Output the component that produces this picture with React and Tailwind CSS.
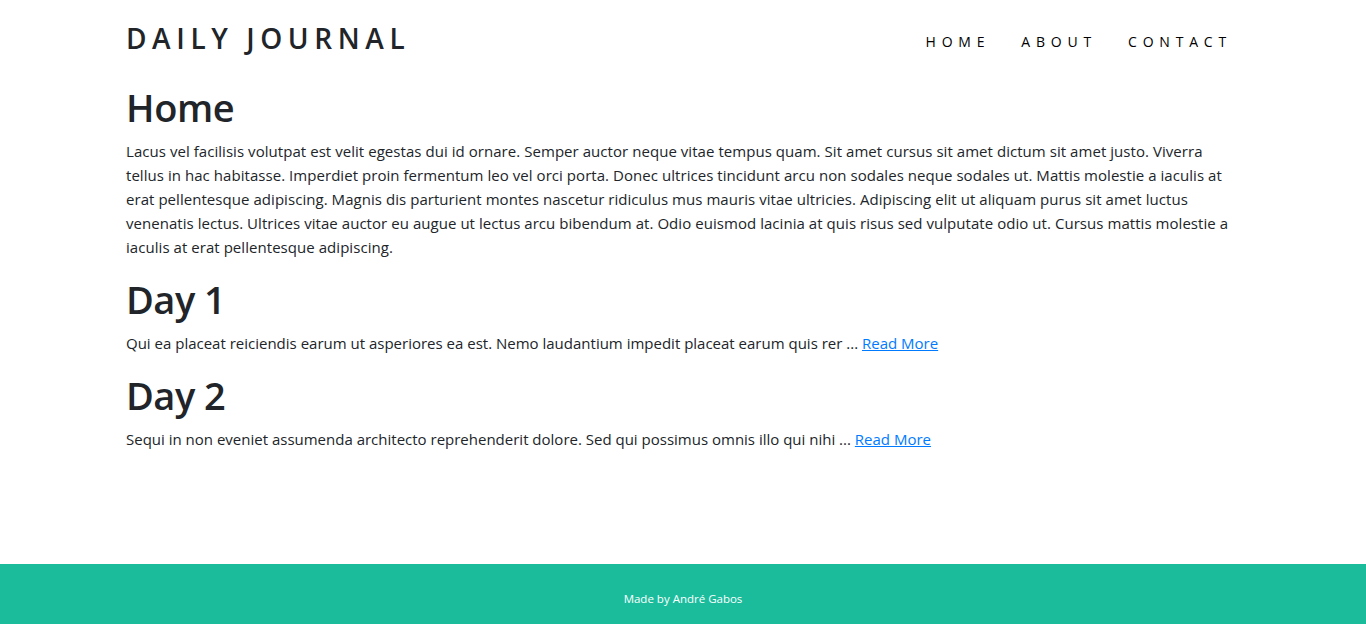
import React from "react";

const lines = [
  "Lacus vel facilisis volutpat est velit egestas dui id ornare. Semper auctor neque vitae tempus quam. Sit amet cursus sit amet dictum sit amet justo. Viverra",
  "tellus in hac habitasse. Imperdiet proin fermentum leo vel orci porta. Donec ultrices tincidunt arcu non sodales neque sodales ut. Mattis molestie a iaculis at",
  "erat pellentesque adipiscing. Magnis dis parturient montes nascetur ridiculus mus mauris vitae ultricies. Adipiscing elit ut aliquam purus sit amet luctus",
  "venenatis lectus. Ultrices vitae auctor eu augue ut lectus arcu bibendum at. Odio euismod lacinia at quis risus sed vulputate odio ut. Cursus mattis molestie a",
  "iaculis at erat pellentesque adipiscing.",
];

export default function App() {
  return (
    <div
      className="min-h-screen flex flex-col bg-white text-[#212529]"
      style={{ fontFamily: '"Open Sans", "Noto Sans", sans-serif' }}
    >
      <nav className="w-[1114px] mx-auto h-[83px] flex items-start justify-between">
        <a className="mt-[24px] text-[28px] leading-none font-semibold tracking-[5.6px] text-[#212529]">
          DAILY JOURNAL
        </a>
        <ul className="mt-[35px] mr-[8px] flex gap-[31px] text-[14px] leading-none tracking-[5.8px] text-black">
          <li>HOME</li>
          <li>ABOUT</li>
          <li>CONTACT</li>
        </ul>
      </nav>
      <main className="w-[1114px] mx-auto flex-1">
        <h1 className="text-[38px] leading-[48px] font-semibold tracking-[-0.4px] mb-2">Home</h1>
        <p className="text-[15px] leading-6 tracking-[0.05px] mb-4">
          {lines.map((l, i) => (
            <span key={i} className="block whitespace-nowrap">
              {l}
            </span>
          ))}
        </p>
        <h1 className="text-[38px] leading-[48px] font-semibold tracking-[-0.5px] mb-2">Day 1</h1>
        <p className="text-[15px] leading-6 mb-4">
          Qui ea placeat reiciendis earum ut asperiores ea est. Nemo laudantium impedit placeat earum quis rer ...{" "}
          <a className="text-[#007bff] underline">Read More</a>
        </p>
        <h1 className="text-[38px] leading-[48px] font-semibold tracking-[-0.5px] mb-2">Day 2</h1>
        <p className="text-[15px] leading-6 mb-4">
          Sequi in non eveniet assumenda architecto reprehenderit dolore. Sed qui possimus omnis illo qui nihi ...{" "}
          <a className="text-[#007bff] underline">Read More</a>
        </p>
      </main>
      <footer className="h-[60px] bg-[#1abc9c] flex items-center justify-center pt-[9px] text-white text-[11.5px]">
        Made by André Gabos
      </footer>
    </div>
  );
}
